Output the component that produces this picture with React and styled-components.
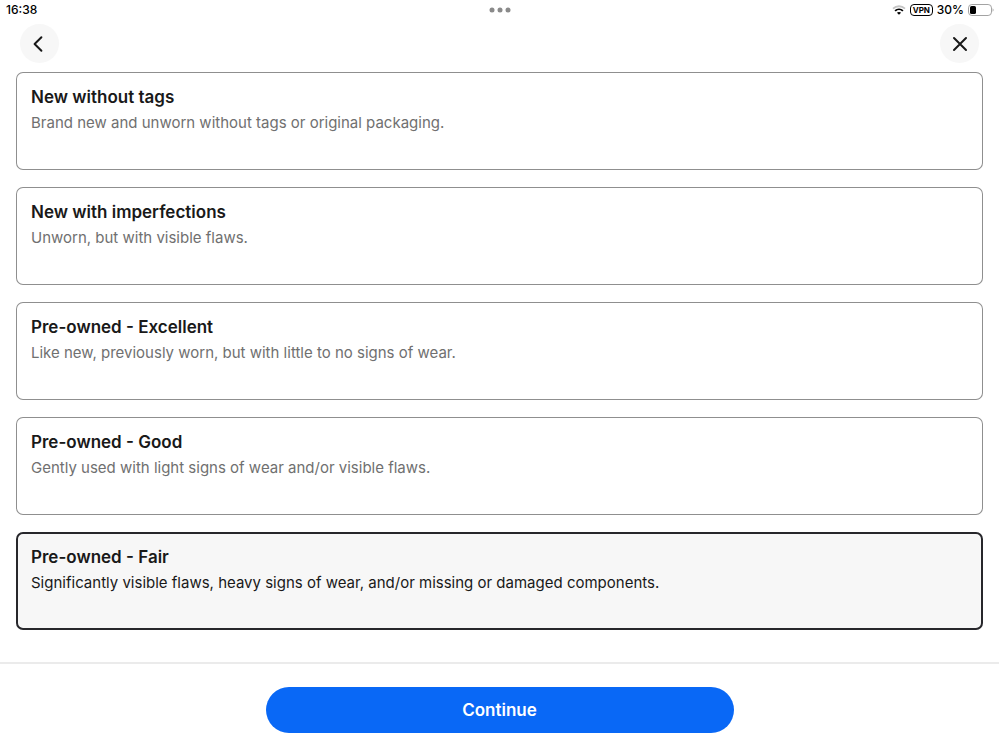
import React, { useState } from "react";
import styled, { createGlobalStyle } from "styled-components";

const GlobalStyle = createGlobalStyle`
  * {
    box-sizing: border-box;
  }
  body {
    margin: 0;
    background: #ffffff;
    color: #191919;
    font-family: Inter, "Liberation Sans", sans-serif;
  }
`;

const Page = styled.div`
  min-height: 100vh;
  display: flex;
  flex-direction: column;
`;

const StatusBar = styled.div`
  height: 20px;
  padding: 0 5px 0 6px;
  display: grid;
  grid-template-columns: 1fr auto 1fr;
  align-items: center;
  font-size: 12px;
  line-height: 20px;
  font-weight: 500;
  color: #000000;
`;
const StatusIcons = styled.div`
  display: flex;
  justify-content: flex-end;
  align-items: center;
  gap: 4px;
`;
const VpnBadge = styled.span`
  width: 23px;
  height: 12px;
  border: 1px solid #000000;
  border-radius: 4px;
  font-size: 8px;
  line-height: 10px;
  font-weight: 700;
  text-align: center;
`;

const Header = styled.header`
  padding: 4px 20px 9px;
  display: flex;
  justify-content: space-between;
`;
const RoundButton = styled.button`
  width: 39px;
  height: 39px;
  padding: 0;
  border: none;
  border-radius: 50%;
  display: grid;
  place-items: center;
  background: #f7f7f7;
  color: #191919;
  cursor: pointer;
`;

const ConditionList = styled.main`
  flex: 1;
  padding: 0 16px 32px;
  display: flex;
  flex-direction: column;
  gap: 17px;
`;
const ConditionRadio = styled.input`
  position: absolute;
  opacity: 0;
  pointer-events: none;
`;
const ConditionCard = styled.label`
  position: relative;
  min-height: 98px;
  padding: 15px;
  border-radius: 7px;
  background: ${props => (props.$selected ? "#f7f7f7" : "#ffffff")};
  box-shadow: inset 0 0 0
    ${props => (props.$selected ? "2px #27272b" : "1px #8f8f8f")};
  cursor: pointer;
`;
const ConditionTitle = styled.span`
  display: block;
  font-size: 17px;
  line-height: 20px;
  font-weight: 600;
  color: #191919;
`;
const ConditionDesc = styled.span`
  display: block;
  margin-top: 6px;
  font-size: 15px;
  line-height: 20px;
  color: ${props => (props.$selected ? "#191919" : "#707070")};
`;

const Footer = styled.footer`
  padding: 23px 16px 16px;
  display: flex;
  justify-content: center;
  border-top: 2px solid #ebebeb;
`;
const ContinueButton = styled.button`
  width: 100%;
  max-width: 468px;
  height: 46px;
  border: none;
  border-radius: 23px;
  background: #0968f6;
  color: #ffffff;
  font-family: inherit;
  font-size: 17px;
  font-weight: 600;
  cursor: pointer;
`;

const conditions = [
  {
    id: "new-without-tags",
    title: "New without tags",
    desc: "Brand new and unworn without tags or original packaging."
  },
  {
    id: "new-imperfections",
    title: "New with imperfections",
    desc: "Unworn, but with visible flaws."
  },
  {
    id: "excellent",
    title: "Pre-owned - Excellent",
    desc: "Like new, previously worn, but with little to no signs of wear."
  },
  {
    id: "good",
    title: "Pre-owned - Good",
    desc: "Gently used with light signs of wear and/or visible flaws."
  },
  {
    id: "fair",
    title: "Pre-owned - Fair",
    desc:
      "Significantly visible flaws, heavy signs of wear, and/or missing or damaged components."
  }
];

const DotsIcon = () => (
  <svg width="22" height="6" viewBox="0 0 22 6" fill="#8a8a8a">
    <circle cx="3" cy="3" r="2.5" />
    <circle cx="11" cy="3" r="2.5" />
    <circle cx="19" cy="3" r="2.5" />
  </svg>
);

const WifiIcon = () => (
  <svg width="14" height="10" viewBox="0 0 14 10" fill="none">
    <path d="M1 3.6C4.4 0.5 9.6 0.5 13 3.6" stroke="#c4c4c4" strokeWidth="1.9" />
    <path d="M3.1 5.9C5.3 3.9 8.7 3.9 10.9 5.9" stroke="#000" strokeWidth="1.9" />
    <path d="M4.9 7.7C6.1 6.6 7.9 6.6 9.1 7.7L7 9.8Z" fill="#000" />
  </svg>
);

const BatteryIcon = () => (
  <svg width="26" height="12" viewBox="0 0 26 12" fill="none">
    <rect x="0.5" y="0.5" width="23" height="11" rx="3.4" stroke="#a3a3a3" />
    <rect x="2" y="2" width="6" height="8" rx="1.6" fill="#000" />
    <path d="M24.6 4.2C25.9 4.8 25.9 7.2 24.6 7.8Z" fill="#a3a3a3" />
  </svg>
);

const BackIcon = () => (
  <svg width="20" height="20" viewBox="0 0 20 20" fill="none">
    <path
      d="M11.4 3.2L4.6 10L11.4 16.8"
      stroke="currentColor"
      strokeWidth="2"
      strokeLinecap="round"
      strokeLinejoin="round"
    />
  </svg>
);

const CloseIcon = () => (
  <svg width="20" height="20" viewBox="0 0 20 20" fill="none">
    <path
      d="M4 4L16 16M16 4L4 16"
      stroke="currentColor"
      strokeWidth="2"
      strokeLinecap="round"
    />
  </svg>
);

export default function App() {
  const [selected, setSelected] = useState("fair");

  return (
    <Page>
      <GlobalStyle />
      <StatusBar>
        <span>16:38</span>
        <DotsIcon />
        <StatusIcons>
          <WifiIcon />
          <VpnBadge>VPN</VpnBadge>
          <span>30%</span>
          <BatteryIcon />
        </StatusIcons>
      </StatusBar>
      <Header>
        <RoundButton type="button" aria-label="Back">
          <BackIcon />
        </RoundButton>
        <RoundButton type="button" aria-label="Close">
          <CloseIcon />
        </RoundButton>
      </Header>
      <ConditionList role="radiogroup" aria-label="Condition">
        {conditions.map(({ id, title, desc }) => (
          <ConditionCard key={id} htmlFor={id} $selected={selected === id}>
            <ConditionRadio
              type="radio"
              name="condition"
              id={id}
              checked={selected === id}
              onChange={() => setSelected(id)}
            />
            <ConditionTitle>{title}</ConditionTitle>
            <ConditionDesc $selected={selected === id}>{desc}</ConditionDesc>
          </ConditionCard>
        ))}
      </ConditionList>
      <Footer>
        <ContinueButton type="button">Continue</ContinueButton>
      </Footer>
    </Page>
  );
}
